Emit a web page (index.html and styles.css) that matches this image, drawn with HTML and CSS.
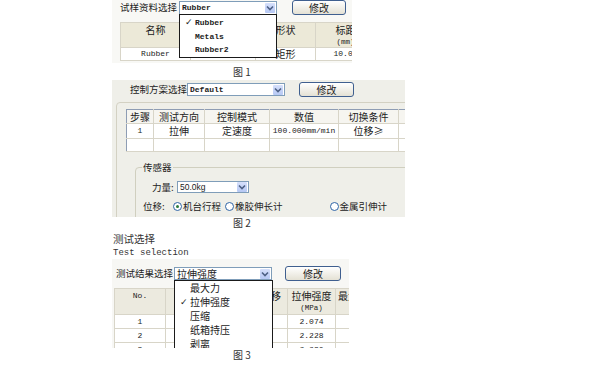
FILE: index.html
```html
<!DOCTYPE html>
<html lang="zh">
<head>
    <meta charset="UTF-8">
    <meta name="viewport" content="width=device-width, initial-scale=1.0">
    <title>试样 / 控制方案 / 测试选择</title>
    <link rel="stylesheet" href="styles.css">
</head>
<body>
<div class="doc">

    <!-- FIGURE 1 -->
    <div class="shot shot1">
        <div class="bar">
            <span class="lbl">试样资料选择</span>
            <div class="combo"><span class="val mono">Rubber</span><span class="drop"><svg width="8" height="6" viewBox="0 0 8 6"><polyline points="1,1.5 4,4.5 7,1.5" fill="none" stroke="#4d6185" stroke-width="1.6"/></svg></span></div>
            <button class="btn">修改</button>
        </div>
        <table class="grid g1">
            <colgroup><col style="width:70px"><col style="width:65px"><col style="width:60px"><col style="width:60px"></colgroup>
            <tr><th>名称</th><th></th><th>形状</th><th>标距<br><span class="unit">(mm)</span></th></tr>
            <tr><td class="mono">Rubber</td><td></td><td>矩形</td><td class="num">10.00</td></tr>
        </table>
        <ul class="list l1">
            <li class="on">Rubber</li>
            <li>Metals</li>
            <li>Rubber2</li>
        </ul>
    </div>
    <div class="cap cap1">图 1</div>

    <!-- FIGURE 2 -->
    <div class="shot shot2">
        <div class="bar">
            <span class="lbl">控制方案选择</span>
            <div class="combo"><span class="val mono">Default</span><span class="drop"><svg width="8" height="6" viewBox="0 0 8 6"><polyline points="1,1.5 4,4.5 7,1.5" fill="none" stroke="#4d6185" stroke-width="1.6"/></svg></span></div>
            <button class="btn">修改</button>
        </div>
        <div class="frame">
            <table class="grid g2">
                <colgroup><col style="width:27px"><col style="width:51px"><col style="width:65px"><col style="width:69px"><col style="width:60px"><col style="width:40px"></colgroup>
                <tr><th>步骤</th><th>测试方向</th><th>控制模式</th><th>数值</th><th>切换条件</th><th></th></tr>
                <tr class="r1"><td class="num">1</td><td>拉伸</td><td>定速度</td><td class="num">100.000mm/min</td><td>位移≥</td><td></td></tr>
                <tr class="r2"><td></td><td></td><td></td><td></td><td></td><td></td></tr>
            </table>
            <fieldset class="sensor">
                <legend>传感器</legend>
                <div class="row force">
                    <span class="flbl">力量:</span>
                    <div class="combo small"><span class="val">50.0kg</span><span class="drop"><svg width="8" height="6" viewBox="0 0 8 6"><polyline points="1,1.5 4,4.5 7,1.5" fill="none" stroke="#4d6185" stroke-width="1.6"/></svg></span></div>
                </div>
                <div class="row shift">
                    <span class="flbl">位移:</span>
                    <label class="radio r-a"><span class="dot on"></span>机台行程</label>
                    <label class="radio r-b"><span class="dot"></span>橡胶伸长计</label>
                    <label class="radio r-c"><span class="dot"></span>金属引伸计</label>
                </div>
            </fieldset>
        </div>
    </div>
    <div class="cap cap2">图 2</div>

    <div class="title">测试选择</div>
    <div class="sub">Test selection</div>

    <!-- FIGURE 3 -->
    <div class="shot shot3">
        <div class="bar">
            <span class="lbl">测试结果选择</span>
            <div class="combo"><span class="val">拉伸强度</span><span class="drop"><svg width="8" height="6" viewBox="0 0 8 6"><polyline points="1,1.5 4,4.5 7,1.5" fill="none" stroke="#4d6185" stroke-width="1.6"/></svg></span></div>
            <button class="btn">修改</button>
        </div>
        <table class="grid g3">
            <colgroup><col style="width:51px"><col style="width:57px"><col style="width:65px"><col style="width:48px"><col style="width:60px"></colgroup>
            <tr><th class="mono">No.</th><th></th><th class="right">断裂位移</th><th>拉伸强度<br><span class="unit">(MPa)</span></th><th class="left">最大力</th></tr>
            <tr><td class="num">1</td><td></td><td></td><td class="num">2.074</td><td></td></tr>
            <tr><td class="num">2</td><td></td><td></td><td class="num">2.228</td><td></td></tr>
            <tr><td class="num">3</td><td></td><td></td><td class="num">2.230</td><td></td></tr>
        </table>
        <ul class="list l3">
            <li>最大力</li>
            <li class="on">拉伸强度</li>
            <li>压缩</li>
            <li>纸箱持压</li>
            <li>剥离</li>
        </ul>
    </div>
    <div class="cap cap3">图 3</div>

</div>
</body>
</html>
```

FILE: styles.css
```css
*{
    margin:0;
    padding:0;
    box-sizing: border-box;
}
body{
    background-color: #fff;
    font-family: "Noto Sans CJK SC", "Liberation Sans", sans-serif;
    font-size: 10px;
    color: #222;
}
.doc{
    padding-left: 112px;
}
.mono{
    font-family: "Liberation Mono", monospace;
    font-weight: bold;
    font-size: 8px;
}
/* SCREENSHOT PANELS */
.shot{
    position: relative;
    overflow: hidden;
}
.shot1{
    width: 240px;
    height: 63px;
    background-color: #f8f8f5;
}
.shot2{
    width: 293px;
    height: 137px;
    background-color: #efefe9;
}
.shot3{
    width: 237px;
    height: 89px;
    background-color: #f7f7f4;
}
/* TOP BAR */
.bar{
    display: flex;
    align-items: center;
    height: 15px;
}
.shot1 .bar{ padding-left: 8px; }
.shot2 .bar{ padding-left: 18px; margin-top: 2px; }
.shot3 .bar{ padding-left: 4px; margin-top: 7px; }
.lbl{
    font-size: 9.5px;
    line-height: 15px;
    white-space: nowrap;
}
.shot1 .lbl{ width: 59px; }
.shot2 .lbl{ width: 57px; }
.shot3 .lbl{ width: 58px; }
/* COMBO BOX */
.combo{
    width: 98px;
    height: 13px;
    border: 1px solid #7f9db9;
    background-color: #fff;
    display: flex;
    align-items: center;
    justify-content: space-between;
    padding: 0 1px 0 2px;
}
.shot1 .combo{ height: 14px; }
.combo .val{
    line-height: 11px;
    white-space: nowrap;
}
.shot3 .combo .val{ font-size: 10px; }
.combo.small{
    width: 72px;
    height: 12px;
}
.combo.small .val{
    font-family: "Liberation Sans", sans-serif;
    font-size: 8.5px;
}
.drop{
    width: 10px;
    height: 10px;
    border-radius: 1px;
    background: linear-gradient(#d6e0fb, #b6c8f4);
    display: flex;
    align-items: center;
    justify-content: center;
}
/* BUTTON */
.btn{
    height: 15px;
    border: 1px solid #3f5f8f;
    border-radius: 3px;
    background: linear-gradient(#ffffff, #e4e1d4);
    font-family: inherit;
    font-size: 10px;
    line-height: 13px;
    color: #222;
}
.shot1 .btn{ margin-left: 15px; width: 54px; }
.shot2 .btn{ margin-left: 14px; width: 55px; }
.shot3 .btn{ margin-left: 13px; width: 56px; }
/* TABLES */
.grid{
    border-collapse: collapse;
    table-layout: fixed;
    background-color: #fff;
}
.grid th, .grid td{
    border: 1px solid #d8d5c8;
    padding: 0;
    text-align: center;
    font-weight: normal;
    white-space: nowrap;
    overflow: hidden;
}
.grid .num{
    font-family: "Liberation Mono", monospace;
    font-size: 8px;
}
.unit{
    font-family: "Liberation Mono", monospace;
    font-size: 7.5px;
}
.g1{
    width: 255px;
    margin: 7px 0 0 8px;
}
.g1 th{
    background-color: #ece9d8;
    vertical-align: top;
    line-height: 10px;
    padding: 2px 0 0;
}
.g1 td{
    line-height: 12px;
}
.g2{
    width: 312px;
}
.g2 th{
    background-color: #f6f5f0;
    line-height: 13px;
}
.g2 .r1 td{ line-height: 14px; }
.g2 .r2 td{ height: 13px; }
.g2 tr > :first-child{ border-left-color: #8e9db4; }
.g2 tr:first-child > *{ border-top-color: #8e9db4; }
.g3{
    width: 281px;
    margin: 7px 0 0 2px;
}
.g3 th{
    background-color: #eceadf;
    vertical-align: top;
    line-height: 10px;
    padding: 2px 0 1px;
}
.g3 td{
    line-height: 13px;
}
.g3 .right{ text-align: right; padding-right: 6px; }
.g3 .left{ text-align: left; padding-left: 2px; }
/* FRAME + SENSOR GROUP */
.frame{
    width: 330px;
    height: 150px;
    margin: 5px 0 0 4px;
    padding: 6px 0 0 9px;
    border: 1px solid #d3d1c3;
    border-radius: 4px;
}
.sensor{
    width: 300px;
    height: 80px;
    margin: 9px 0 0 9px;
    padding: 0;
    border: 1px solid #d0cfbf;
    border-radius: 4px;
}
.sensor legend{
    margin-left: 6px;
    padding: 0 1px;
    font-size: 9.5px;
    line-height: 12px;
    color: #222;
}
.row{
    display: flex;
    align-items: center;
    height: 14px;
    font-size: 9.5px;
}
.force{
    margin-top: 7px;
    padding-left: 16px;
}
.force .flbl{ width: 25px; }
.shift{
    margin-top: 5px;
    padding-left: 7px;
}
.shift .flbl{ width: 24px; }
.radio{
    display: inline-flex;
    align-items: center;
    white-space: nowrap;
}
.r-a{ margin-left: 6px; }
.r-b{ margin-left: 4px; }
.r-c{ margin-left: 47px; }
.dot{
    width: 9px;
    height: 9px;
    margin-right: 1px;
    border: 1px solid #2f64a6;
    border-radius: 50%;
    background-color: #fff;
    display: flex;
    align-items: center;
    justify-content: center;
}
.dot.on::after{
    content: "";
    width: 3px;
    height: 3px;
    border-radius: 50%;
    background-color: #2b7a3c;
}
/* DROPDOWN LISTS */
.list{
    position: absolute;
    list-style: none;
    background-color: #fff;
    border: 1px solid #1a1a1a;
}
.list li{
    position: relative;
    padding-left: 15px;
    white-space: nowrap;
}
.list li.on::before{
    content: "\2713";
    position: absolute;
    left: 5px;
    font-family: "DejaVu Sans", sans-serif;
    font-weight: normal;
    font-size: 9px;
}
.l1{
    left: 67px;
    top: 14px;
    width: 98px;
    height: 44px;
    padding-top: 1px;
}
.l1 li{
    height: 13.5px;
    line-height: 13.5px;
    font-family: "Liberation Mono", monospace;
    font-weight: bold;
    font-size: 8px;
}
.l3{
    left: 62px;
    top: 21px;
    width: 99px;
    height: 80px;
}
.l3 li{
    height: 14px;
    line-height: 14px;
    font-size: 10px;
}
/* CAPTIONS */
.cap{
    padding-left: 121px;
    font-size: 10px;
    color: #333;
}
.cap1{ height: 17px; line-height: 17px; }
.cap2{ height: 11px; line-height: 11px; }
.cap3{ height: 14px; line-height: 14px; }
.title{
    padding: 3px 0 0 1px;
    line-height: 16px;
    font-size: 10.5px;
    color: #333;
}
.sub{
    padding-left: 1px;
    line-height: 12px;
    font-family: "Liberation Mono", monospace;
    font-size: 9px;
    color: #333;
}
```
